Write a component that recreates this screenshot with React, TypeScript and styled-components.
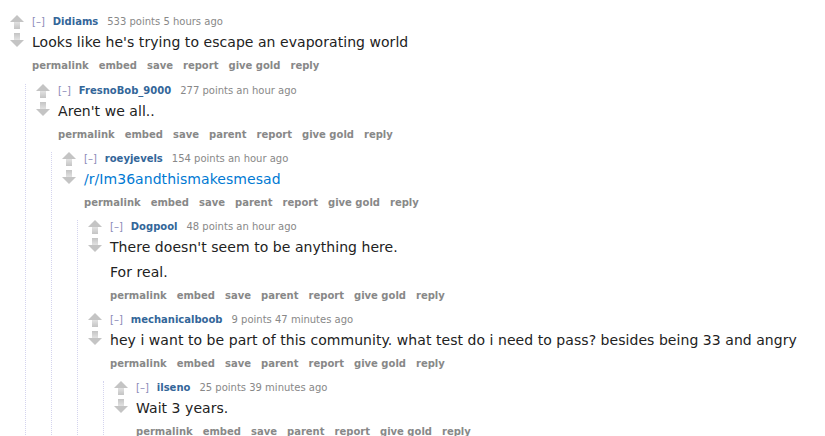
import * as React from 'react';
import styled, {createGlobalStyle} from 'styled-components';

const GlobalStyle = createGlobalStyle`
    html, body {
        margin: 0;
        padding: 0;
        background: #ffffff;
    }
    body {
        font-family: "DejaVu Sans", Verdana, Arial, sans-serif;
        overflow: hidden;
    }
`;

const Page = styled.div`
    padding: 15px 0 40px 0;
    width: 825px;
`;

const CommentBox = styled.div<{$first?: boolean}>`
    margin-top: ${props => props.$first ? '0' : '10px'};
`;

const CommentRow = styled.div`
    display: flex;
    align-items: flex-start;
`;

const Midcol = styled.div`
    display: flex;
    flex-direction: column;
    align-items: flex-start;
    gap: 4px;
    width: 22px;
    flex: 0 0 22px;
    margin-left: 10px;
    padding-top: 0;
`;

const Entry = styled.div`
    flex: 1;
    min-width: 0;
`;

const Tagline = styled.div`
    font-size: 10px;
    line-height: 14px;
    color: #888888;
    white-space: nowrap;
`;

const Expand = styled.span`
    color: #8a8ab8;
    margin-right: 8px;
`;

const Author = styled.span`
    color: #336699;
    font-weight: bold;
    margin-right: 9px;
`;

const Body = styled.div`
    display: flex;
    flex-direction: column;
    gap: 5px;
    margin-top: 3px;
    color: #222222;
    font-size: 14px;
    line-height: 20px;
    letter-spacing: 0.05px;

    p {
        margin: 0;
    }
`;

const BodyLink = styled.span`
    color: #0079d3;
`;

const Buttons = styled.ul`
    display: flex;
    gap: 10px;
    list-style: none;
    margin: 7px 0 0 0;
    padding: 0;
    font-size: 10px;
    line-height: 14px;
    font-weight: bold;
    color: #888888;
    white-space: nowrap;
`;

const Children = styled.div<{$top?: boolean}>`
    margin: ${props => props.$top ? '11px' : '10px'} 0 0 25px;
    border-left: 1px dotted #d4d4ee;
`;

interface CommentData {
    author: string;
    points: string;
    time: string;
    body: React.ReactNode[];
    children?: CommentData[];
}

const thread: CommentData = {
    author: 'Didiams',
    points: '533 points',
    time: '5 hours ago',
    body: ["Looks like he's trying to escape an evaporating world"],
    children: [
        {
            author: 'FresnoBob_9000',
            points: '277 points',
            time: 'an hour ago',
            body: ["Aren't we all.."],
            children: [
                {
                    author: 'roeyjevels',
                    points: '154 points',
                    time: 'an hour ago',
                    body: [<BodyLink key="l">/r/Im36andthismakesmesad</BodyLink>],
                    children: [
                        {
                            author: 'Dogpool',
                            points: '48 points',
                            time: 'an hour ago',
                            body: ["There doesn't seem to be anything here.", 'For real.'],
                        },
                        {
                            author: 'mechanicalboob',
                            points: '9 points',
                            time: '47 minutes ago',
                            body: ['hey i want to be part of this community. what test do i need to pass? besides being 33 and angry'],
                            children: [
                                {
                                    author: 'ilseno',
                                    points: '25 points',
                                    time: '39 minutes ago',
                                    body: ['Wait 3 years.'],
                                },
                            ],
                        },
                    ],
                },
            ],
        },
    ],
};

const Arrow: React.FC<{down?: boolean}> = ({down}) => (
    <svg width="14" height="14" viewBox="0 0 14 14" style={{display: 'block', transform: down ? 'rotate(180deg)' : undefined}}>
        <defs>
            <linearGradient id="stem" x1="0" y1="0" x2="0" y2="1">
                <stop offset="0" stopColor="#e2e2e2"/>
                <stop offset="1" stopColor="#c4c4c4"/>
            </linearGradient>
        </defs>
        <polygon points="7,0 14,7 0,7" fill="#c4c4c4"/>
        <rect x="4" y="7" width="6" height="7" fill="url(#stem)"/>
    </svg>
);

const Comment: React.FC<{data: CommentData, top?: boolean, first?: boolean}> = ({data, top, first}) => {
    const buttons = top
        ? ['permalink', 'embed', 'save', 'report', 'give gold', 'reply']
        : ['permalink', 'embed', 'save', 'parent', 'report', 'give gold', 'reply'];

    return (
        <CommentBox $first={first}>
            <CommentRow>
                <Midcol>
                    <Arrow/>
                    <Arrow down/>
                </Midcol>
                <Entry>
                    <Tagline>
                        <Expand>[–]</Expand>
                        <Author>{data.author}</Author>
                        {data.points} {data.time}
                    </Tagline>
                    <Body>
                        {data.body.map((b, i) => <p key={i}>{b}</p>)}
                    </Body>
                    <Buttons>
                        {buttons.map(b => <li key={b}>{b}</li>)}
                    </Buttons>
                </Entry>
            </CommentRow>
            {data.children && (
                <Children $top={top}>
                    {data.children.map((c, i) => (
                        <Comment key={c.author} data={c} first={i === 0}/>
                    ))}
                </Children>
            )}
        </CommentBox>
    );
};

const App: React.FC = () => (
    <>
        <GlobalStyle/>
        <Page>
            <Comment data={thread} top first/>
        </Page>
    </>
);

export default App;
